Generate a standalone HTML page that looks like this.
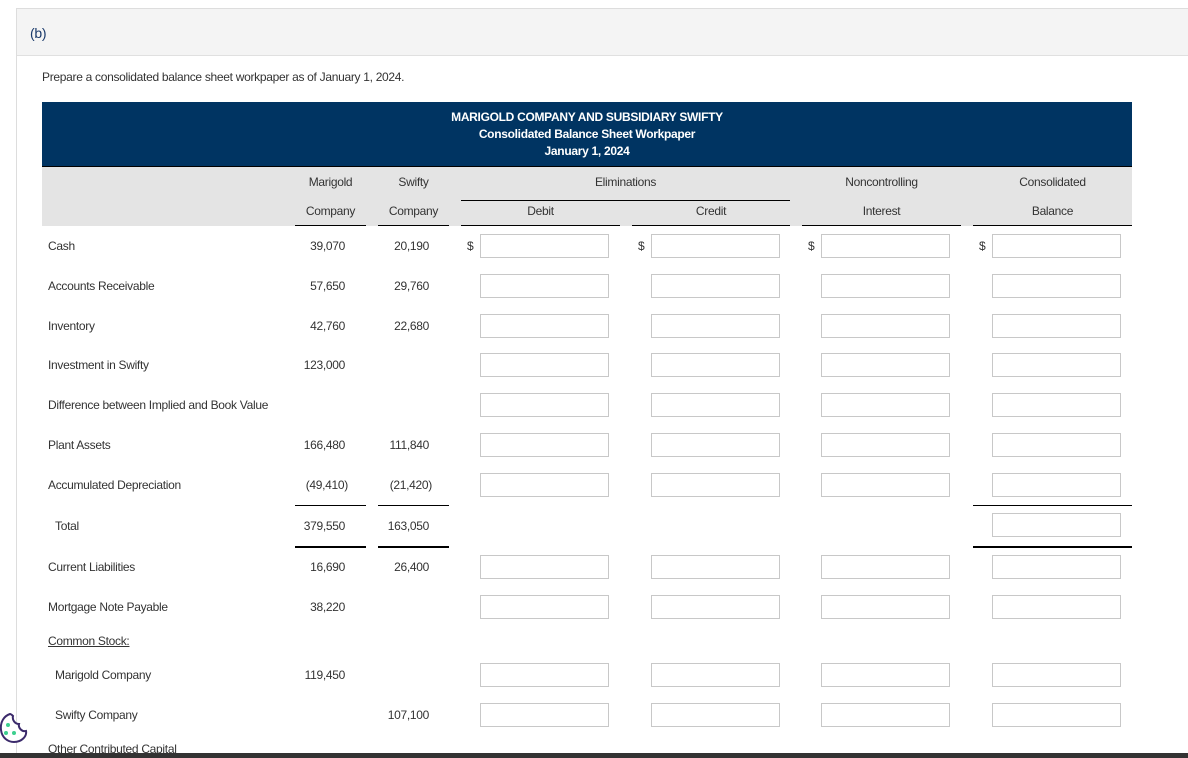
<!DOCTYPE html>
<html><head><meta charset="utf-8"><style>
*{margin:0;padding:0;box-sizing:border-box}
body{width:1188px;height:758px;overflow:hidden;background:#fff;font-family:"Liberation Sans",sans-serif;color:#333;font-size:12px;letter-spacing:-0.3px;position:relative}
.a{position:absolute;white-space:nowrap}
.card{position:absolute;left:16px;top:8px;width:1180px;height:750px;border-left:1px solid #ddd;border-top:1px solid #ddd}
.hd{position:absolute;left:17px;top:9px;width:1171px;height:47px;background:#f4f4f4;border-bottom:1px solid #e0e0e0}
.in{position:absolute;width:129px;height:24px;border:1px solid #c8c8c8;background:#fff}
.n{position:absolute;text-align:right;width:80px;margin-top:1px}
.l{position:absolute;background:#000;height:1px}
.th{position:absolute;text-align:center;font-size:12px}
.r{margin-top:1px}
</style></head><body>
<div class="card"></div>
<div class="hd"></div>
<div class="a" style="left:30px;top:25px;font-size:14px;color:#1a3a6b">(b)</div>
<div class="a" style="left:42px;top:70px">Prepare a consolidated balance sheet workpaper as of January 1, 2024.</div>
<div class="a" style="left:42px;top:102px;width:1090px;height:65px;background:#003462;border-bottom:1px solid #000"></div>
<div class="a" style="left:42px;top:109px;width:1090px;text-align:center;color:#fff;font-weight:bold;font-size:12px;line-height:17px">MARIGOLD COMPANY AND SUBSIDIARY SWIFTY<br>Consolidated Balance Sheet Workpaper<br>January 1, 2024</div>
<div class="a" style="left:42px;top:167px;width:1090px;height:59px;background:#e4e4e4"></div>
<div class="th" style="left:295px;top:175px;width:71px">Marigold</div>
<div class="th" style="left:378px;top:175px;width:71px">Swifty</div>
<div class="th" style="left:295px;top:204px;width:71px">Company</div>
<div class="th" style="left:378px;top:204px;width:71px">Company</div>
<div class="th" style="left:461px;top:175px;width:329px">Eliminations</div>
<div class="l" style="left:461px;top:200px;width:329px"></div>
<div class="th" style="left:461px;top:204px;width:159px">Debit</div>
<div class="th" style="left:632px;top:204px;width:158px">Credit</div>
<div class="th" style="left:802px;top:175px;width:159px">Noncontrolling</div>
<div class="th" style="left:802px;top:204px;width:159px">Interest</div>
<div class="th" style="left:973px;top:175px;width:159px">Consolidated</div>
<div class="th" style="left:973px;top:204px;width:159px">Balance</div>
<div class="l" style="left:295px;top:225px;width:71px"></div>
<div class="l" style="left:378px;top:225px;width:71px"></div>
<div class="l" style="left:461px;top:225px;width:159px"></div>
<div class="l" style="left:632px;top:225px;width:158px"></div>
<div class="l" style="left:802px;top:225px;width:159px"></div>
<div class="l" style="left:973px;top:225px;width:159px"></div>

<div class="a r" style="left:48px;top:238px">Cash</div><div class="n" style="left:265px;top:238px">39,070</div><div class="n" style="left:349px;top:238px">20,190</div>
<div class="a r" style="left:467px;top:238px">$</div><div class="a r" style="left:638px;top:238px">$</div><div class="a r" style="left:808px;top:238px">$</div><div class="a r" style="left:979px;top:238px">$</div>
<div class="in" style="left:480px;top:234px"></div><div class="in" style="left:651px;top:234px"></div><div class="in" style="left:821px;top:234px"></div><div class="in" style="left:992px;top:234px"></div>

<div class="a r" style="left:48px;top:278px">Accounts Receivable</div><div class="n" style="left:265px;top:278px">57,650</div><div class="n" style="left:349px;top:278px">29,760</div>
<div class="in" style="left:480px;top:274px"></div><div class="in" style="left:651px;top:274px"></div><div class="in" style="left:821px;top:274px"></div><div class="in" style="left:992px;top:274px"></div>

<div class="a r" style="left:48px;top:318px">Inventory</div><div class="n" style="left:265px;top:318px">42,760</div><div class="n" style="left:349px;top:318px">22,680</div>
<div class="in" style="left:480px;top:314px"></div><div class="in" style="left:651px;top:314px"></div><div class="in" style="left:821px;top:314px"></div><div class="in" style="left:992px;top:314px"></div>

<div class="a r" style="left:48px;top:357px">Investment in Swifty</div><div class="n" style="left:265px;top:357px">123,000</div>
<div class="in" style="left:480px;top:353px"></div><div class="in" style="left:651px;top:353px"></div><div class="in" style="left:821px;top:353px"></div><div class="in" style="left:992px;top:353px"></div>

<div class="a r" style="left:48px;top:397px">Difference between Implied and Book Value</div>
<div class="in" style="left:480px;top:393px"></div><div class="in" style="left:651px;top:393px"></div><div class="in" style="left:821px;top:393px"></div><div class="in" style="left:992px;top:393px"></div>

<div class="a r" style="left:48px;top:437px">Plant Assets</div><div class="n" style="left:265px;top:437px">166,480</div><div class="n" style="left:349px;top:437px">111,840</div>
<div class="in" style="left:480px;top:433px"></div><div class="in" style="left:651px;top:433px"></div><div class="in" style="left:821px;top:433px"></div><div class="in" style="left:992px;top:433px"></div>

<div class="a r" style="left:48px;top:477px">Accumulated Depreciation</div><div class="n" style="left:268px;top:477px">(49,410)</div><div class="n" style="left:352px;top:477px">(21,420)</div>
<div class="in" style="left:480px;top:473px"></div><div class="in" style="left:651px;top:473px"></div><div class="in" style="left:821px;top:473px"></div><div class="in" style="left:992px;top:473px"></div>
<div class="l" style="left:295px;top:505px;width:71px"></div><div class="l" style="left:378px;top:505px;width:71px"></div><div class="l" style="left:973px;top:505px;width:159px"></div>

<div class="a r" style="left:55px;top:518px">Total</div><div class="n" style="left:265px;top:518px">379,550</div><div class="n" style="left:349px;top:518px">163,050</div>
<div class="in" style="left:992px;top:513px"></div>
<div class="l" style="left:295px;top:546px;width:71px;height:2px"></div><div class="l" style="left:378px;top:546px;width:71px;height:2px"></div><div class="l" style="left:973px;top:546px;width:159px;height:2px"></div>

<div class="a r" style="left:48px;top:559px">Current Liabilities</div><div class="n" style="left:265px;top:559px">16,690</div><div class="n" style="left:349px;top:559px">26,400</div>
<div class="in" style="left:480px;top:555px"></div><div class="in" style="left:651px;top:555px"></div><div class="in" style="left:821px;top:555px"></div><div class="in" style="left:992px;top:555px"></div>

<div class="a r" style="left:48px;top:599px">Mortgage Note Payable</div><div class="n" style="left:265px;top:599px">38,220</div>
<div class="in" style="left:480px;top:595px"></div><div class="in" style="left:651px;top:595px"></div><div class="in" style="left:821px;top:595px"></div><div class="in" style="left:992px;top:595px"></div>

<div class="a r" style="left:48px;top:633px;text-decoration:underline">Common Stock:</div>

<div class="a r" style="left:55px;top:667px">Marigold Company</div><div class="n" style="left:265px;top:667px">119,450</div>
<div class="in" style="left:480px;top:663px"></div><div class="in" style="left:651px;top:663px"></div><div class="in" style="left:821px;top:663px"></div><div class="in" style="left:992px;top:663px"></div>

<div class="a r" style="left:55px;top:707px">Swifty Company</div><div class="n" style="left:349px;top:707px">107,100</div>
<div class="in" style="left:480px;top:703px"></div><div class="in" style="left:651px;top:703px"></div><div class="in" style="left:821px;top:703px"></div><div class="in" style="left:992px;top:703px"></div>

<div class="a r" style="left:48px;top:741px;text-decoration:underline">Other Contributed Capital</div>
<div class="a" style="left:0;top:753px;width:1188px;height:5px;background:#333"></div>
<svg class="a" style="left:0;top:712px" width="30" height="36" viewBox="0 0 30 36"><path d="M10 2 C4 4 0 10 1 18 C2 26 8 30 14 30 C22 30 27 24 26 19 C22 20 18 16 19 12 C15 12 12 8 13 4 C12 3 11 2 10 2Z" fill="#fff" stroke="#3b2a6b" stroke-width="2"/><circle cx="8" cy="13" r="2" fill="#3ccf8e"/><circle cx="6" cy="21" r="2" fill="#3ccf8e"/><circle cx="14" cy="21" r="2" fill="#3ccf8e"/></svg>
</body></html>
